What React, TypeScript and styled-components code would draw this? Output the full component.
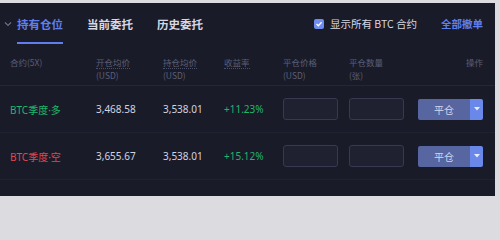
import React from 'react';
import styled, { createGlobalStyle } from 'styled-components';

// == styles =======================================================================================
const GlobalStyle = createGlobalStyle`
  html, body {
    margin: 0;
    background: #dcdce0;
  }
  body {
    font-family: "Noto Sans CJK SC", "Noto Sans", sans-serif;
  }
`;

const Panel = styled.div`
  box-sizing: border-box;
  margin: 3px 5px 0 0;
  width: 495px;
  height: 193px;
  background: #1a1b29;
  display: flex;
  flex-direction: column;
`;

const TabBar = styled.div`
  display: flex;
  align-items: stretch;
  height: 41px;
  padding: 0 12px 0 4px;
`;

const Chevron = styled.span`
  display: flex;
  align-items: center;
  width: 13px;
  color: #6c7088;
`;

const Tab = styled.div<{ active?: boolean }>`
  display: flex;
  align-items: center;
  margin-right: 24px;
  font-size: 11.5px;
  font-weight: 700;
  color: ${ ( p ) => ( p.active ? '#5f7ff0' : '#d6d8e4' ) };
  border-bottom: 2px solid ${ ( p ) => ( p.active ? '#5f7ff0' : 'transparent' ) };
  padding-top: 2px;
`;

const Spacer = styled.div`
  flex: 1;
`;

const ShowAll = styled.label`
  display: flex;
  align-items: center;
  gap: 6px;
  font-size: 10.5px;
  color: #d6d8e4;
  margin-right: 24px;
`;

const Check = styled.span`
  display: inline-flex;
  align-items: center;
  justify-content: center;
  width: 10px;
  height: 10px;
  border-radius: 2px;
  background: #6f8cf0;
`;

const CancelAll = styled.span`
  display: flex;
  align-items: center;
  font-size: 10.5px;
  font-weight: 700;
  color: #5f7ff0;
`;

const Grid = styled.div`
  display: grid;
  grid-template-columns: 86px 67px 61px 59px 66px 69px 65px;
  padding-left: 10px;
  align-items: center;
`;

const HeadRow = styled( Grid )`
  height: 42px;
  align-items: start;
  padding-top: 12px;
  box-sizing: border-box;
  border-bottom: 1px solid #24263a;
`;

const HeadCell = styled.div<{ right?: boolean }>`
  font-size: 8.5px;
  line-height: 13px;
  color: #5b5f76;
  text-align: ${ ( p ) => ( p.right ? 'right' : 'left' ) };
`;

const Tip = styled.span`
  border-bottom: 1px dotted #4a4e66;
`;

const Row = styled( Grid )`
  height: 46px;
  border-bottom: 1px solid #202234;
`;

const Cell = styled.div<{ tone?: 'up' | 'down' }>`
  font-family: "Noto Sans", "Noto Sans CJK SC", sans-serif;
  font-size: 10px;
  color: ${ ( p ) => ( p.tone === 'up' ? '#22b56c' : p.tone === 'down' ? '#e0474f' : '#d2d4e0' ) };
`;

const Input = styled.input`
  box-sizing: border-box;
  width: 55px;
  height: 22px;
  background: #1f2131;
  border: 1px solid #363950;
  border-radius: 3px;
  outline: none;
`;

const Split = styled.div`
  display: flex;
  height: 21px;
  border-radius: 2px;
  overflow: hidden;
`;

const CloseButton = styled.button`
  width: 52px;
  border: none;
  background: #5765a0;
  color: #d4d8ee;
  font-family: "Noto Sans CJK SC", sans-serif;
  font-size: 10px;
  padding: 0;
`;

const Caret = styled.span`
  display: flex;
  align-items: center;
  justify-content: center;
  width: 13px;
  background: #6a87ea;
`;

// == data =========================================================================================
const rows = [
  { name: 'BTC季度·多', tone: 'up' as const, open: '3,468.58', hold: '3,538.01', rate: '+11.23%' },
  { name: 'BTC季度·空', tone: 'down' as const, open: '3,655.67', hold: '3,538.01', rate: '+15.12%' },
];

// == component ====================================================================================
const App = (): JSX.Element => {
  return <>
    <GlobalStyle />
    <Panel>
      <TabBar>
        <Chevron>
          <svg width="8" height="6" viewBox="0 0 8 6">
            <path d="M1 1.5 L4 4.5 L7 1.5" stroke="currentColor" strokeWidth="1.1" fill="none" />
          </svg>
        </Chevron>
        <Tab active>持有仓位</Tab>
        <Tab>当前委托</Tab>
        <Tab>历史委托</Tab>
        <Spacer />
        <ShowAll>
          <Check>
            <svg width="8" height="8" viewBox="0 0 8 8">
              <path d="M1.5 4 L3.3 5.8 L6.6 2.2" stroke="#fff" strokeWidth="1.3" fill="none" />
            </svg>
          </Check>
          显示所有 BTC 合约
        </ShowAll>
        <CancelAll>全部撤单</CancelAll>
      </TabBar>

      <HeadRow>
        <HeadCell>合约(5X)</HeadCell>
        <HeadCell><Tip>开仓均价</Tip><br />(USD)</HeadCell>
        <HeadCell><Tip>持仓均价</Tip><br />(USD)</HeadCell>
        <HeadCell><Tip>收益率</Tip></HeadCell>
        <HeadCell>平仓价格<br />(USD)</HeadCell>
        <HeadCell>平仓数量<br />(张)</HeadCell>
        <HeadCell right>操作</HeadCell>
      </HeadRow>

      { rows.map( ( r ) => (
        <Row key={ r.name }>
          <Cell tone={ r.tone }>{ r.name }</Cell>
          <Cell>{ r.open }</Cell>
          <Cell>{ r.hold }</Cell>
          <Cell tone="up">{ r.rate }</Cell>
          <Input />
          <Input />
          <Split>
            <CloseButton>平仓</CloseButton>
            <Caret>
              <svg width="6" height="4" viewBox="0 0 6 4">
                <path d="M0 0 H6 L3 3.5 Z" fill="#e8ecff" />
              </svg>
            </Caret>
          </Split>
        </Row>
      ) ) }
    </Panel>
  </>;
};

export default App;
